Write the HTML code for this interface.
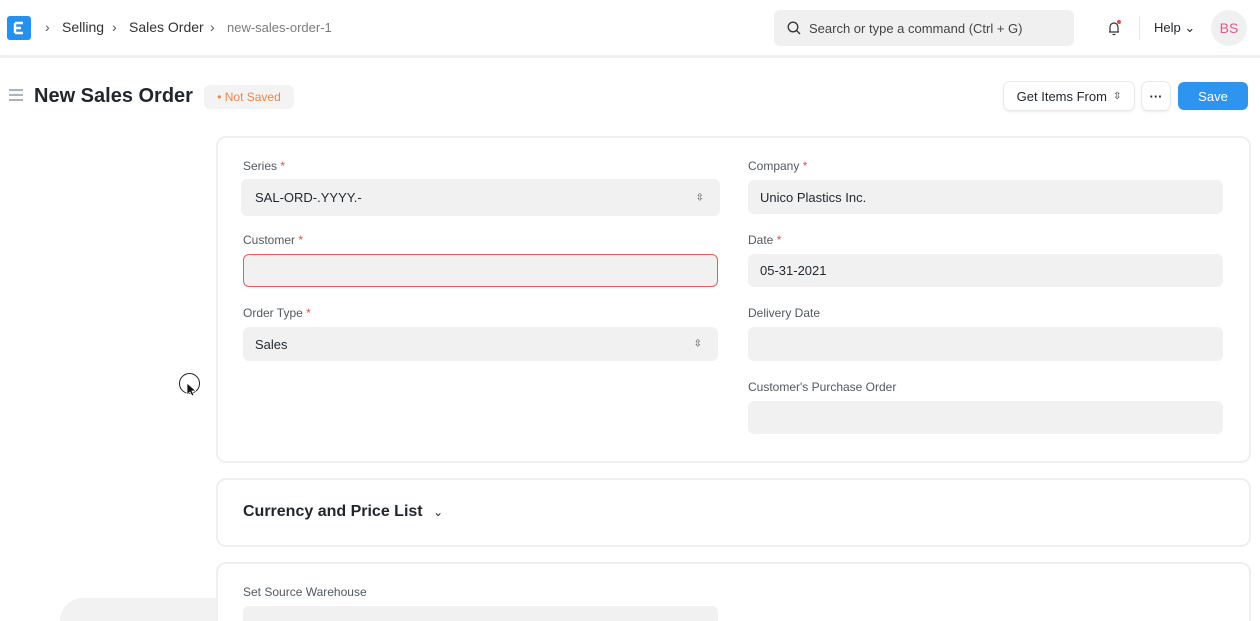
<!DOCTYPE html>
<html style="width:1260px;height:621px;overflow:hidden"><head><meta charset="utf-8"><style>
*{box-sizing:border-box;margin:0;padding:0}
body{width:1260px;height:621px;overflow:hidden;background:#fff;font-family:"Liberation Sans",sans-serif;color:#1f272e;position:relative}
.abs{position:absolute}
.nav{left:0;top:0;width:1260px;height:58px;border-bottom:3px solid #f0f0f0}
.logo{left:7px;top:16px;width:24px;height:24px;background:#2490ef;border-radius:3px}
.bc{top:19px;font-size:14px;color:#333}
.search{left:774px;top:10px;width:300px;height:36px;background:#f0f0f0;border-radius:6px}
.lbl{font-size:12px;color:#505a62}
.lbl b{color:#e24c4c;font-weight:normal}
.inp{background:#f1f1f1;border-radius:6px;font-size:13px;padding-left:12px;display:flex;align-items:center}
.card{border:2px solid #efefef;border-radius:10px;background:#fff}
.btn{border-radius:6px;box-shadow:0 0 0 1px #e8e8e8,0 2px 3px rgba(0,0,0,.08);font-size:13px;display:flex;align-items:center;justify-content:center;background:#fff}
.arrows{position:absolute;right:16px;top:50%;transform:translateY(-50%)}
</style></head><body>
<div class="abs" style="left:60px;top:598px;width:1140px;height:23px;background:#f2f2f2;border-radius:50px 50px 0 0"></div>
<div class="abs nav"></div>
<div class="abs logo"><svg width="24" height="24"><path d="M8 7h8M8 12h6M8 17h8M8 7v10" stroke="#fff" stroke-width="2.4" fill="none"/></svg></div>
<div class="abs bc" style="left:45px;color:#555">›</div>
<div class="abs bc" style="left:62px">Selling</div>
<div class="abs bc" style="left:112px;color:#555">›</div>
<div class="abs bc" style="left:129px">Sales Order</div>
<div class="abs bc" style="left:210px;color:#555">›</div>
<div class="abs bc" style="left:227px;color:#7c7c7c;font-size:13px;top:20px">new-sales-order-1</div>
<div class="abs search"><svg class="abs" style="left:13px;top:11px" width="14" height="14"><circle cx="6" cy="6" r="4.8" stroke="#333" stroke-width="1.3" fill="none"/><path d="M9.5 9.5l3.5 3.5" stroke="#333" stroke-width="1.3"/></svg><span class="abs" style="left:35px;top:11px;font-size:13px;color:#444">Search or type a command (Ctrl + G)</span></div>
<svg class="abs" style="left:1104px;top:18px" width="20" height="20"><path d="M5 14h10M6 14V9a4 4 0 0 1 8 0v5M8.5 16.5h3" stroke="#333" stroke-width="1.2" fill="none"/><circle cx="15" cy="4" r="2" fill="#e24c4c"/></svg>
<div class="abs" style="left:1139px;top:16px;width:1px;height:24px;background:#e8e8e8"></div>
<div class="abs" style="left:1154px;top:20px;font-size:13px">Help ⌄</div>
<div class="abs" style="left:1211px;top:10px;width:36px;height:36px;border-radius:50%;background:#f0f0f0;color:#e5588a;font-size:14px;display:flex;align-items:center;justify-content:center">BS</div>

<svg class="abs" style="left:9px;top:89px" width="14" height="12"><path d="M0 1h14M0 6h14M0 11h14" stroke="#8d99a6" stroke-width="1.5"/></svg>
<div class="abs" style="left:34px;top:85px;font-size:20px;font-weight:bold">New Sales Order</div>
<div class="abs" style="left:204px;top:85px;width:90px;height:24px;background:#f3f3f3;border-radius:6px;color:#ec864b;font-size:12px;display:flex;align-items:center;justify-content:center">• Not Saved</div>
<div class="abs btn" style="left:1004px;top:82px;width:130px;height:28px">Get Items From <span style="font-size:10px;margin-left:6px">⇳</span></div>
<div class="abs btn" style="left:1142px;top:82px;width:28px;height:28px;font-weight:bold">···</div>
<div class="abs" style="left:1178px;top:82px;width:70px;height:28px;background:#2d95f0;border-radius:6px;color:#fff;font-size:13px;display:flex;align-items:center;justify-content:center">Save</div>

<div class="abs card" style="left:216px;top:136px;width:1035px;height:327px"></div>
<div class="abs lbl" style="left:243px;top:159px">Series <b>*</b></div>
<div class="abs inp" style="left:241px;top:179px;width:479px;height:37px;padding-left:14px">SAL-ORD-.YYYY.-<span class="arrows" style="font-size:10px;color:#555">⇳</span></div>
<div class="abs lbl" style="left:243px;top:233px">Customer <b>*</b></div>
<div class="abs inp" style="left:243px;top:254px;width:475px;height:33px;border:1px solid #e85d5d"></div>
<div class="abs lbl" style="left:243px;top:306px">Order Type <b>*</b></div>
<div class="abs inp" style="left:243px;top:327px;width:475px;height:34px">Sales<span class="arrows" style="font-size:10px;color:#555">⇳</span></div>

<div class="abs lbl" style="left:748px;top:159px">Company <b>*</b></div>
<div class="abs inp" style="left:748px;top:180px;width:475px;height:34px">Unico Plastics Inc.</div>
<div class="abs lbl" style="left:748px;top:233px">Date <b>*</b></div>
<div class="abs inp" style="left:748px;top:254px;width:475px;height:33px">05-31-2021</div>
<div class="abs lbl" style="left:748px;top:306px">Delivery Date</div>
<div class="abs inp" style="left:748px;top:327px;width:475px;height:34px"></div>
<div class="abs lbl" style="left:748px;top:380px">Customer's Purchase Order</div>
<div class="abs inp" style="left:748px;top:401px;width:475px;height:33px"></div>

<div class="abs" style="left:179px;top:373px;width:21px;height:21px;border:1.5px solid #222;border-radius:50%"></div>
<svg class="abs" style="left:186px;top:382px" width="10" height="16"><path d="M1 1v12l3-3 2 4 2-1-2-4h4z" fill="#111" stroke="#fff" stroke-width=".8"/></svg>

<div class="abs card" style="left:216px;top:478px;width:1035px;height:69px"></div>
<div class="abs" style="left:243px;top:503px;font-size:16px;font-weight:bold">Currency and Price List <span style="font-weight:normal;font-size:12px;margin-left:6px">⌄</span></div>

<div class="abs card" style="left:216px;top:562px;width:1035px;height:59px;border-bottom:none;border-radius:10px 10px 0 0"></div>
<div class="abs lbl" style="left:243px;top:585px">Set Source Warehouse</div>
<div class="abs inp" style="left:243px;top:606px;width:475px;height:15px;border-radius:6px 6px 0 0"></div>
</body></html>
